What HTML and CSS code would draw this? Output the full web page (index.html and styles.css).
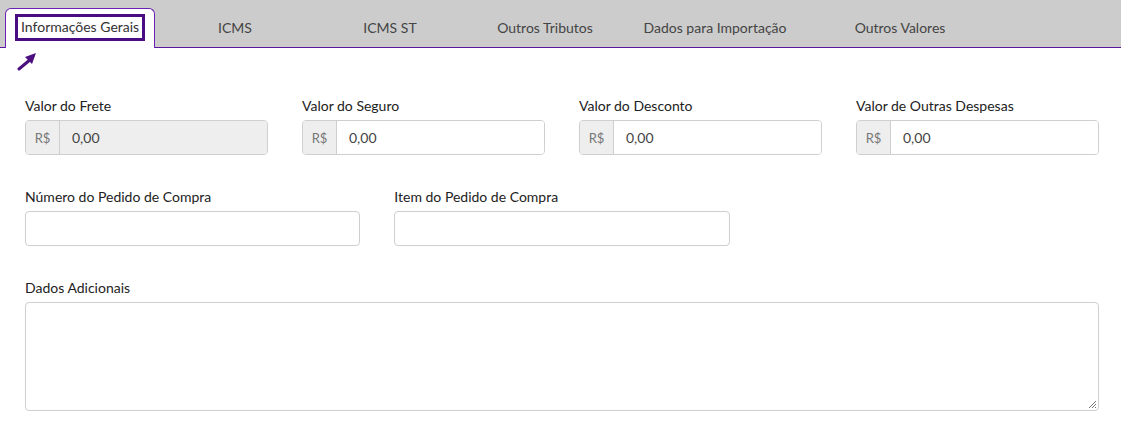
FILE: index.html
```html
<!DOCTYPE html>
<html lang="pt-BR">
<head>
<meta charset="utf-8">
<link rel="stylesheet" href="styles.css">
</head>
<body>
<div class="tabs">
  <div class="tab tab-active"><span class="focus-box">Informações Gerais</span></div>
  <div class="tab">ICMS</div>
  <div class="tab">ICMS ST</div>
  <div class="tab">Outros Tributos</div>
  <div class="tab tab-wide">Dados para Importação</div>
  <div class="tab tab-wide">Outros Valores</div>
</div>
<div class="arrow-row">
  <svg class="arrow" width="22" height="20" viewBox="0 0 22 20">
    <line x1="2" y1="17" x2="14" y2="7" stroke="#4b0f80" stroke-width="3" stroke-linecap="round"/>
    <polygon points="19,1 8,5 15,12" fill="#4b0f80"/>
  </svg>
</div>
<main class="form">
  <div class="row row-4">
    <div class="field">
      <label class="label">Valor do Frete</label>
      <div class="group disabled"><span class="addon">R$</span><span class="input">0,00</span></div>
    </div>
    <div class="field">
      <label class="label">Valor do Seguro</label>
      <div class="group"><span class="addon">R$</span><span class="input">0,00</span></div>
    </div>
    <div class="field">
      <label class="label">Valor do Desconto</label>
      <div class="group"><span class="addon">R$</span><span class="input">0,00</span></div>
    </div>
    <div class="field">
      <label class="label">Valor de Outras Despesas</label>
      <div class="group"><span class="addon">R$</span><span class="input">0,00</span></div>
    </div>
  </div>
  <div class="row row-3">
    <div class="field">
      <label class="label">Número do Pedido de Compra</label>
      <div class="box"></div>
    </div>
    <div class="field">
      <label class="label">Item do Pedido de Compra</label>
      <div class="box"></div>
    </div>
  </div>
  <div class="row row-1">
    <div class="field">
      <label class="label">Dados Adicionais</label>
      <div class="box textarea">
        <svg class="grip" width="9" height="9" viewBox="0 0 9 9">
          <line x1="1" y1="8" x2="8" y2="1" stroke="#777" stroke-width="1"/>
          <line x1="4" y1="8" x2="8" y2="4" stroke="#777" stroke-width="1"/>
          <line x1="7" y1="8" x2="8" y2="7" stroke="#777" stroke-width="1"/>
        </svg>
      </div>
    </div>
  </div>
</main>
</body>
</html>
```

FILE: styles.css
```css
* { box-sizing: border-box; }
html, body { margin: 0; padding: 0; background: #fff; }
body {
  font-family: Lato, "Open Sans", "Noto Sans", sans-serif;
  color: #222;
  font-size: 14px;
}
.tabs {
  display: flex;
  gap: 5px;
  height: 48px;
  padding: 8px 0 0 5px;
  background: #cccccc;
  border-bottom: 1px solid #5a1a9e;
}
.tab {
  width: 150px;
  display: flex;
  align-items: center;
  justify-content: center;
  font-size: 14px;
  color: #444;
  padding-bottom: 1px;
}
.tab-wide { width: 180px; }
.tab-active {
  background: #fff;
  border: 1px solid #6a22b5;
  border-bottom: none;
  border-radius: 6px 6px 0 0;
  margin-bottom: -1px;
  justify-content: flex-start;
  padding-left: 9px;
  color: #333;
}
.focus-box {
  display: inline-block;
  border: 3px solid #4a0c82;
  padding: 2px 3px 3px 3px;
  line-height: 16px;
  margin-top: -1px;
}
.arrow-row {
  height: 26px;
  padding: 4px 0 0 17px;
}
.arrow { display: block; }
.form {
  padding: 23px 22px 0 25px;
}
.row {
  display: grid;
  column-gap: 34px;
  margin-bottom: 33px;
}
.row-4 { grid-template-columns: repeat(4, 1fr); }
.row-3 { grid-template-columns: repeat(3, 1fr); }
.row-1 { grid-template-columns: 1fr; }
.field { display: flex; flex-direction: column; }
.label {
  font-size: 14px;
  line-height: 18px;
  margin-bottom: 5px;
  color: #222;
}
.group {
  display: flex;
  height: 35px;
  border: 1px solid #cfcfcf;
  border-radius: 4px;
  overflow: hidden;
}
.addon {
  width: 34px;
  background: #eeeeee;
  border-right: 1px solid #cfcfcf;
  color: #777;
  font-size: 13px;
  display: flex;
  align-items: center;
  justify-content: center;
}
.input {
  flex: 1;
  display: flex;
  align-items: center;
  padding-left: 12px;
  color: #444;
  font-size: 14px;
  background: #fff;
}
.disabled .input { background: #eeeeee; }
.box {
  height: 35px;
  border: 1px solid #cfcfcf;
  border-radius: 4px;
  background: #fff;
}
.textarea {
  height: 109px;
  position: relative;
}
.grip {
  position: absolute;
  right: 1px;
  bottom: 1px;
}
```
